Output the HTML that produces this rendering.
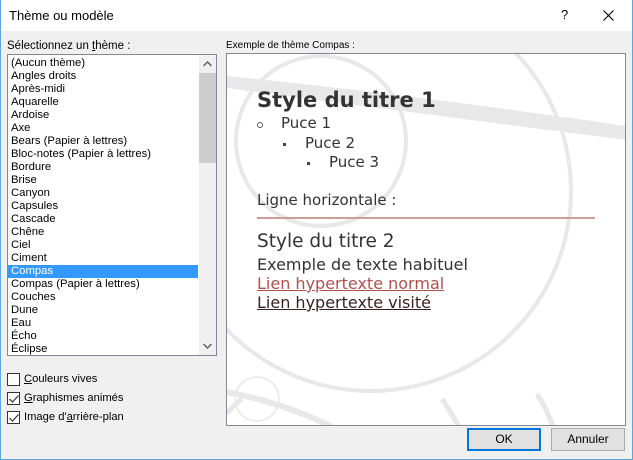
<!DOCTYPE html>
<html><head><meta charset="utf-8"><style>
*{margin:0;padding:0;box-sizing:border-box}
body{width:633px;height:460px;overflow:hidden;background:#f0f0f0;font-family:"Liberation Sans",sans-serif;font-size:12px;color:#000;position:relative}
.frame{position:absolute;left:0;top:0;width:633px;height:460px;border:1px solid #5fa6dc;border-top:none}
.title{position:absolute;left:0;top:0;width:633px;height:31px;background:#fff;border-left:1px solid #5fa6dc;border-right:1px solid #5fa6dc}
.abs{position:absolute;white-space:nowrap}
.list{position:absolute;left:7px;top:54px;width:210px;height:302px;background:#fff;border:1px solid #828790;overflow:hidden}
.item{height:13px;line-height:13px;padding-left:3px;font-size:11.3px}
.sel{background:#3399ff;color:#fff;margin-right:18px}
.sb{position:absolute;right:0;top:0;width:17px;height:300px;background:#f0f0f0}
.cb{position:absolute;left:7px;width:13px;height:13px;border:1px solid #333;background:#fff}
.prev{position:absolute;left:226px;top:53px;width:400px;height:373px;background:#fff;border:1px solid #828790;overflow:hidden}
.pv{position:absolute;white-space:nowrap;font-family:"DejaVu Sans",sans-serif;color:#333}
.btn{position:absolute;top:428px;height:23px;width:74px;background:#e1e1e1;border:1px solid #adadad;text-align:center;line-height:21px;font-size:12px}
.lb{font-size:11.2px}
</style></head><body>
<div class="title"></div>
<div class="frame"></div>
<div class="abs" style="left:9px;top:8px;font-size:13px">Thème ou modèle</div>
<div class="abs" style="left:561px;top:7px;font-size:13px">?</div>
<svg class="abs" style="left:603px;top:10px" width="11" height="11"><path d="M0.5 0.5L10.5 10.5M10.5 0.5L0.5 10.5" stroke="#000" stroke-width="1.1"/></svg>
<div class="abs" style="left:7px;top:40px;font-size:11.5px">Sélectionnez un <u>t</u>hème :</div>
<div class="list">
<div style="height:2px"></div>
<div class="item">(Aucun thème)</div><div class="item">Angles droits</div><div class="item">Après-midi</div><div class="item">Aquarelle</div><div class="item">Ardoise</div><div class="item">Axe</div><div class="item">Bears (Papier à lettres)</div><div class="item">Bloc-notes (Papier à lettres)</div><div class="item">Bordure</div><div class="item">Brise</div><div class="item">Canyon</div><div class="item">Capsules</div><div class="item">Cascade</div><div class="item">Chêne</div><div class="item">Ciel</div><div class="item">Ciment</div><div class="item sel">Compas</div><div class="item">Compas (Papier à lettres)</div><div class="item">Couches</div><div class="item">Dune</div><div class="item">Eau</div><div class="item">Écho</div><div class="item">Éclipse</div>
<div class="sb"><div style="position:absolute;left:0;top:18px;width:17px;height:90px;background:#cdcdcd"></div>
<svg style="position:absolute;left:4px;top:6px" width="9" height="6"><path d="M0.5 5L4.5 1L8.5 5" stroke="#606060" stroke-width="1.5" fill="none"/></svg>
<svg style="position:absolute;left:4px;top:288px" width="9" height="6"><path d="M0.5 1L4.5 5L8.5 1" stroke="#606060" stroke-width="1.5" fill="none"/></svg></div>
</div>
<div class="cb" style="top:373px"></div><div class="abs lb" style="left:24px;top:373px"><u>C</u>ouleurs vives</div>
<div class="cb" style="top:392px"></div><svg class="abs" style="left:9px;top:395px" width="10" height="8"><path d="M0.5 4L3.5 7L9.5 0.5" stroke="#333" fill="none" stroke-width="1.2"/></svg><div class="abs lb" style="left:24px;top:392px"><u>G</u>raphismes animés</div>
<div class="cb" style="top:411px"></div><svg class="abs" style="left:9px;top:414px" width="10" height="8"><path d="M0.5 4L3.5 7L9.5 0.5" stroke="#333" fill="none" stroke-width="1.2"/></svg><div class="abs lb" style="left:24px;top:411px">Image d'<u>a</u>rrière-plan</div>
<div class="abs" style="left:226px;top:40px;font-size:10px">Exemple de thème Compas :</div>
<div class="prev">
<svg style="position:absolute;left:0;top:0" width="400" height="373" fill="none" stroke="#e8e8e8">
<circle cx="144" cy="137" r="200" stroke-width="4"/>
<circle cx="94" cy="87" r="85" stroke-width="4"/>
<path d="M0 22 Q180 40 400 72 L400 86 Q180 58 0 34Z" fill="#e8e8e8" stroke="none"/>
<circle cx="30" cy="345" r="22" stroke-width="1.5"/>
<path d="M0 338 Q60 350 105 373" stroke-width="6"/>
<path d="M215 345 Q225 360 232 373" stroke-width="5"/>
<path d="M310 340 Q320 355 326 373" stroke-width="5"/>
<path d="M15 345 Q5 352 0 360" stroke-width="5"/>
</svg>
<div class="pv" style="left:30px;top:34px;font-size:21px;font-weight:bold">Style du titre 1</div>
<div class="pv" style="left:54px;top:60px;font-size:15px">Puce 1</div>
<div style="position:absolute;left:30px;top:68px;width:6px;height:6px;border:1.5px solid #555;border-radius:50%"></div>
<div class="pv" style="left:78px;top:80px;font-size:15px">Puce 2</div>
<div style="position:absolute;left:56px;top:89px;width:3px;height:3px;background:#444"></div>
<div class="pv" style="left:102px;top:99px;font-size:15px">Puce 3</div>
<div style="position:absolute;left:80px;top:108px;width:3px;height:3px;background:#444"></div>
<div class="pv" style="left:30px;top:137px;font-size:15px">Ligne horizontale :</div>
<div style="position:absolute;left:30px;top:163px;width:338px;height:2px;background:#d09c98"></div>
<div class="pv" style="left:30px;top:177px;font-size:18.5px">Style du titre 2</div>
<div class="pv" style="left:30px;top:201px;font-size:16px">Exemple de texte habituel</div>
<div class="pv" style="left:30px;top:220px;font-size:16px;color:#b0514e;text-decoration:underline">Lien hypertexte normal</div>
<div class="pv" style="left:30px;top:239px;font-size:16px;color:#3b1e1e;text-decoration:underline">Lien hypertexte visité</div>
</div>
<div class="btn" style="left:467px;border:2px solid #0078d7;line-height:19px">OK</div>
<div class="btn" style="left:551px">Annuler</div>
</body></html>
